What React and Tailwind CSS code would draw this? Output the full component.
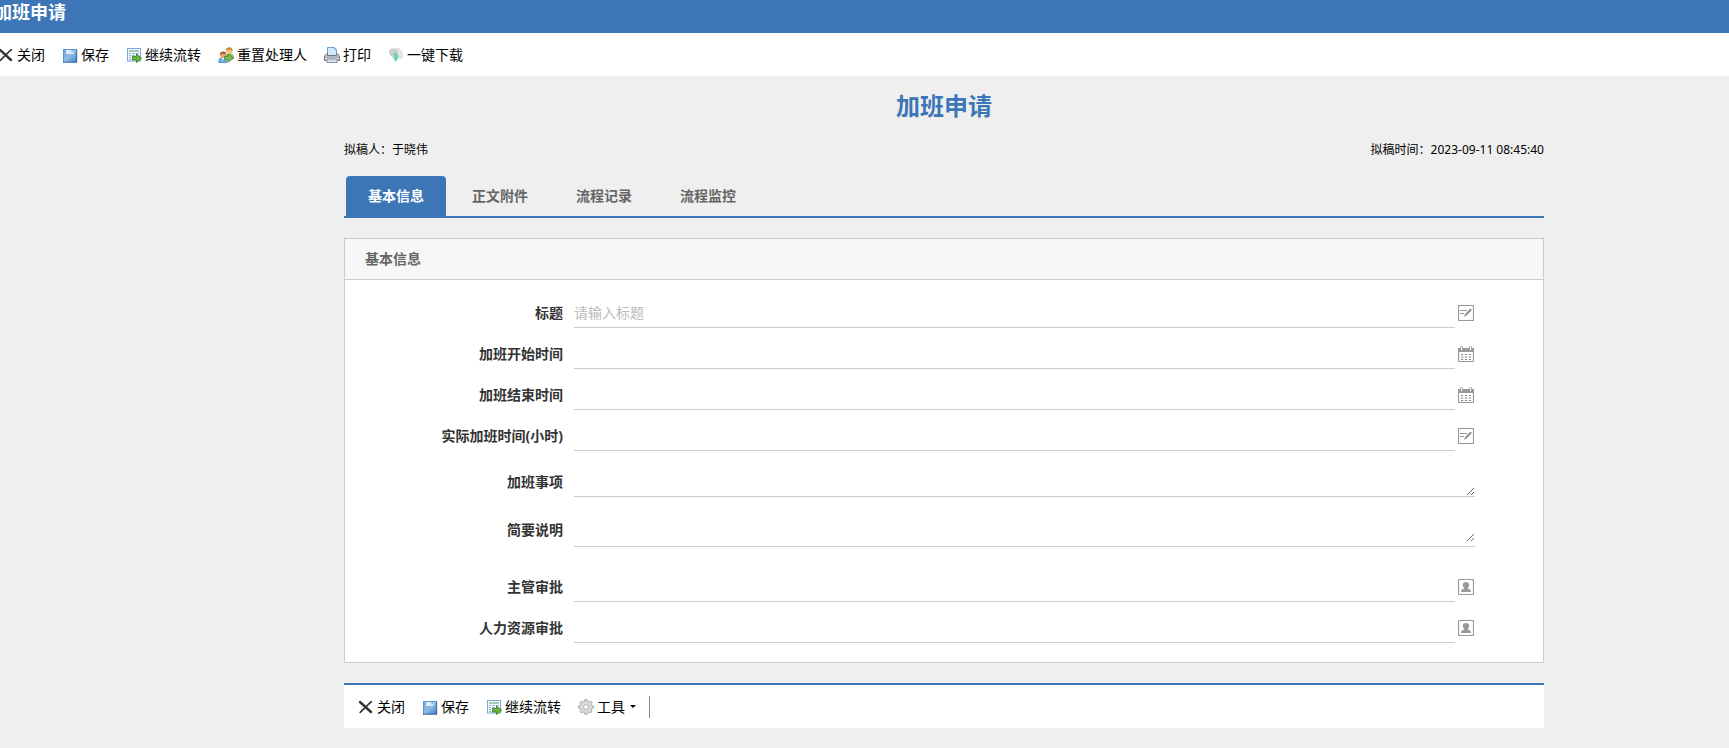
import React, { useState } from 'react'

function CloseIcon() {
  return (
    <svg className="h-4 w-4" viewBox="0 0 16 16" fill="none" stroke="#333" strokeLinecap="round">
      <path d="M2 3L13 13" strokeWidth="2.4" />
      <path d="M13.2 2.6L2.2 13.4" strokeWidth="1.6" />
    </svg>
  )
}

function SaveIcon() {
  return (
    <svg className="h-4 w-4" viewBox="0 0 16 16">
      <defs>
        <linearGradient id="disk" x1="0" y1="0" x2="1" y2="1">
          <stop offset="0" stopColor="#6ba5e0" />
          <stop offset="0.5" stopColor="#8dbbe8" />
          <stop offset="1" stopColor="#3f7dc0" />
        </linearGradient>
      </defs>
      <rect x="1" y="2" width="14" height="13.5" fill="url(#disk)" />
      <path d="M1.5 15.5V2.5H14.5" fill="none" stroke="#5b95d2" />
      <path d="M1 15.2H14.7V2.5" fill="none" stroke="#2f5580" strokeWidth="0.8" />
      <rect x="4" y="3" width="7.5" height="4" fill="#dceafa" />
      <rect x="9.5" y="3" width="1.2" height="2.4" fill="#6ba5e0" />
    </svg>
  )
}

function FlowIcon() {
  return (
    <svg className="h-4 w-4" viewBox="0 0 16 16">
      <rect x="1.5" y="1.5" width="13" height="12.5" fill="#f3f8fe" stroke="#7ba6d8" />
      <rect x="3" y="3" width="10" height="2" fill="#a5cbb4" />
      <path d="M3 6.5H5M6 6.5H9M10 6.5H13M3 8.5H5M6 8.5H9M3 10.5H5M3 12.5H5" stroke="#8eb3de" />
      <path d="M6.5 9.5H10.5V7L15.6 11.2L10.5 15.5V13H6.5Z" fill="#6cb33e" stroke="#3f7d27" strokeWidth="0.9" />
    </svg>
  )
}

function ResetIcon() {
  return (
    <svg className="h-4 w-4" viewBox="0 0 16 16">
      <path d="M7.5 9Q8 6.5 11 6.5Q15.7 6.5 15.7 11.5L10 13Z" fill="#8fbf52" stroke="#5f8d36" strokeWidth="0.5" />
      <circle cx="11.2" cy="4" r="3" fill="#f2c27d" />
      <path d="M7.8 4Q7.5 0.3 11.3 0.3Q15 0.5 14.5 4.4L13 2.8L9.5 2.8Z" fill="#d08a2a" />
      <path d="M0.8 15.5Q0.5 10.5 5 10.5Q9 10.5 9 15.5Z" fill="#74aee6" stroke="#3a75bb" strokeWidth="0.7" />
      <path d="M3.6 10.6L5 13.2L6.6 10.6Z" fill="#fff" />
      <circle cx="5" cy="8.2" r="2.8" fill="#eaa671" />
      <path d="M2 8.2Q1.5 4.7 5 4.6Q8.5 4.7 8 7.6L6.5 6.8L3.4 7Z" fill="#a4592c" />
      <path d="M6.5 9.5H10.2V7.2L15.4 11.2L10.2 15.2V12.8H6.5Z" fill="#7cb956" stroke="#4f8d37" strokeWidth="0.8" />
    </svg>
  )
}

function PrintIcon() {
  return (
    <svg className="h-4 w-4" viewBox="0 0 16 16">
      <path d="M3.5 9V0.5H10.5L12.5 2.5V9Z" fill="#d5e8fa" stroke="#6f9cc8" />
      <path d="M10.3 0.8V2.8H12.3" fill="#fff" stroke="#6f9cc8" strokeWidth="0.7" />
      <path d="M2.5 7H3.5V8.5H12.5V7H13.5Q15.5 8 15.5 10V13.5H0.5V10Q0.5 8 2.5 7Z" fill="#d3d5da" stroke="#6d7179" />
      <path d="M1.5 10H14.5" stroke="#9397a0" />
      <path d="M3 12H13V15.5H3Z" fill="#edf4fb" stroke="#7b8594" strokeWidth="0.9" />
      <path d="M4.5 13.7H11.5" stroke="#b7d0ea" />
    </svg>
  )
}

function DownloadIcon() {
  return (
    <svg className="h-4 w-4" viewBox="0 0 16 16">
      <path d="M5 1.8L10.5 0.8Q13 2 15 6.5L14.5 11.8L9 11Z" fill="#dedede" />
      <path d="M1 5Q1.4 2 5 1.6Q8.5 1.5 9.8 5L11.5 10.5L7 11.5Q1 9 1 5Z" fill="#c9cccb" />
      <path d="M10.5 1L15 6.5L11.5 10.5L9.8 5Z" fill="#e4e4e4" />
      <path d="M6.2 6.3L8.8 5.8L9.2 10.2H10.4L8 15L5.2 11H6.5Z" fill="#52dba5" />
    </svg>
  )
}

function GearIcon() {
  return (
    <svg className="h-4 w-4" viewBox="0 0 16 16">
      <path
        d="M6.7 0.7H9.3L9.7 2.6L11.1 3.2L12.7 2.1L14.2 3.7L13.1 5.2L13.6 6.6L15.4 6.9V9.1L13.6 9.5L13 10.9L14.1 12.5L12.5 14L10.9 13L9.6 13.5L9.2 15.3H6.9L6.5 13.5L5.1 13L3.5 14L2 12.4L3 10.9L2.5 9.5L0.6 9.1V6.9L2.5 6.5L3 5.2L2 3.6L3.5 2.1L5.1 3.1L6.4 2.6Z"
        fill="#dcdcdc"
        stroke="#a3a3a3"
        strokeWidth="0.9"
      />
      <circle cx="8" cy="8" r="2.4" fill="#fff" stroke="#a8a8a8" strokeWidth="0.9" />
    </svg>
  )
}

function EditIcon() {
  return (
    <svg className="h-4 w-4" viewBox="0 0 16 16" fill="none">
      <rect x="0.5" y="0.5" width="15" height="15" rx="0.5" stroke="#999" strokeWidth="1.2" />
      <path d="M2 5.5H9M2 8.5H6" stroke="#999" strokeWidth="1.2" />
      <path d="M13.2 4.3L7.6 10" stroke="#8c8c8c" strokeWidth="2" />
      <path d="M6 11.6L6.6 9.4L8.3 11Z" fill="#8c8c8c" />
    </svg>
  )
}

function CalendarIcon() {
  return (
    <svg className="h-4 w-4" viewBox="0 0 16 16" fill="none">
      <rect x="0.5" y="2.5" width="15" height="13" rx="0.5" stroke="#999" strokeWidth="1.2" />
      <rect x="0" y="2" width="16" height="4" fill="#999" />
      <rect x="2.5" y="0.5" width="2" height="4" rx="1" fill="#fff" stroke="#999" />
      <rect x="11.5" y="0.5" width="2" height="4" rx="1" fill="#fff" stroke="#999" />
      <path d="M3 8.5H13M3 11H13M3 13.5H13" stroke="#888" strokeDasharray="2 2" />
      <path d="M3 8.5H13M3 11H13M3 13.5H13" stroke="#999" opacity="0.25" />
    </svg>
  )
}

function UserIcon() {
  return (
    <svg className="h-4 w-4" viewBox="0 0 16 16" fill="none">
      <rect x="0.5" y="0.5" width="15" height="15" rx="1" stroke="#999" strokeWidth="1.2" />
      <path d="M8 3C10 3 11.2 4.2 11.2 5.9C11.2 7.3 10.5 8 9.8 8.6V9.4C11.5 9.8 13 10.7 13 13H3C3 10.7 4.5 9.8 6.2 9.4V8.6C5.5 8 4.8 7.3 4.8 5.9C4.8 4.2 6 3 8 3Z" fill="#999" />
    </svg>
  )
}

const topActions = [
  { label: '关闭', Icon: CloseIcon },
  { label: '保存', Icon: SaveIcon },
  { label: '继续流转', Icon: FlowIcon },
  { label: '重置处理人', Icon: ResetIcon },
  { label: '打印', Icon: PrintIcon },
  { label: '一键下载', Icon: DownloadIcon },
]

const bottomActions = [
  { label: '关闭', Icon: CloseIcon },
  { label: '保存', Icon: SaveIcon },
  { label: '继续流转', Icon: FlowIcon },
  { label: '工具', Icon: GearIcon, menu: true },
]

const tabs = ['基本信息', '正文附件', '流程记录', '流程监控']

function ActionButton({ label, Icon, menu }) {
  return (
    <button type="button" className="flex items-center gap-[3px] whitespace-nowrap text-sm text-black">
      <Icon />
      <span>{label}</span>
      {menu && <span className="ml-0.5 border-x-[3px] border-t-[3px] border-x-transparent border-t-black"></span>}
    </button>
  )
}

function Label({ id, children }) {
  return (
    <label htmlFor={id} className="w-[218px] shrink-0 text-right text-sm font-bold text-[#333]">
      {children}
    </label>
  )
}

// 单行字段：右侧带图标
function InputRow({ id, label, Icon, placeholder, className = 'mt-[11px]' }) {
  return (
    <div className={`flex items-center gap-[11px] ${className}`}>
      <Label id={id}>{label}</Label>
      <div className="flex min-w-0 flex-1 items-center">
        <input
          id={id}
          type="text"
          placeholder={placeholder}
          className="h-[30px] min-w-0 flex-1 border-b border-[#ccc] bg-white text-sm text-[#333] outline-none placeholder:text-[#bbb]"
        />
        <button type="button" aria-label={label} className="w-5 shrink-0 pl-[3px]">
          <Icon />
        </button>
      </div>
    </div>
  )
}

// 多行字段：可拖拽高度
function TextareaRow({ id, label, className }) {
  return (
    <div className="mt-4 flex items-center gap-[11px]">
      <Label id={id}>{label}</Label>
      <div className={`flex min-w-0 flex-1 border-b border-[#ccc] ${className}`}>
        <textarea id={id} className="h-[29px] w-full resize overflow-hidden bg-white text-sm text-[#333] outline-none" />
      </div>
    </div>
  )
}

export default function App() {
  const [active, setActive] = useState(0)

  return (
    <div className="min-h-screen overflow-hidden bg-[#efefef] pb-5 font-['Noto_Sans','Noto_Sans_CJK_SC',sans-serif] text-black">
      {/* 顶部标题栏 */}
      <header className="h-[33px] bg-[#3c76b7]">
        <h1 className="-ml-1.5 text-lg leading-6 font-bold text-white">加班申请</h1>
      </header>

      <div className="bg-white">
        <div className="-ml-0.5 flex h-[43px] items-center gap-[17px]">
          {topActions.map((a) => (
            <ActionButton key={a.label} {...a} />
          ))}
        </div>
      </div>

      <main className="pr-[185px] pl-[344px]">
        <h2 className="pt-3 text-center text-2xl leading-9 font-bold text-[#3c76b7]">加班申请</h2>

        <div className="mt-4 flex justify-between text-xs leading-5">
          <span>拟稿人：于晓伟</span>
          <span>拟稿时间：2023-09-11 08:45:40</span>
        </div>

        {/* 标签页 */}
        <nav className="mt-4 flex gap-1 border-b-2 border-[#3c76b7] pl-0.5">
          {tabs.map((t, i) => (
            <button
              key={t}
              type="button"
              onClick={() => setActive(i)}
              className={`h-10 rounded-t px-[22px] text-sm font-bold ${
                active === i ? 'bg-[#3c76b7] text-white' : 'text-[#666]'
              }`}
            >
              {t}
            </button>
          ))}
        </nav>

        <section className="mt-5 border border-[#ccc] bg-white">
          <h3 className="flex h-[41px] items-center border-b border-[#ccc] bg-[#f7f7f7] px-5 text-sm font-bold text-[#666]">
            基本信息
          </h3>
          <form className="pt-[7px] pr-[68px] pb-[19px]">
            <InputRow id="title" label="标题" placeholder="请输入标题" Icon={EditIcon} />
            <InputRow id="start" label="加班开始时间" Icon={CalendarIcon} />
            <InputRow id="end" label="加班结束时间" Icon={CalendarIcon} />
            <InputRow id="hours" label="实际加班时间(小时)" Icon={EditIcon} />
            <TextareaRow id="matter" label="加班事项" className="" />
            <TextareaRow id="remark" label="简要说明" className="pb-1" />
            <InputRow id="manager" label="主管审批" Icon={UserIcon} className="mt-[25px]" />
            <InputRow id="hr" label="人力资源审批" Icon={UserIcon} />
          </form>
        </section>

        {/* 底部操作栏 */}
        <div className="mt-5 flex h-[45px] items-center gap-[17px] border-t-2 border-[#3c76b7] bg-white pl-3.5">
          {bottomActions.map((a) => (
            <ActionButton key={a.label} {...a} />
          ))}
          <span className="-ml-1 h-[22px] w-px bg-[#888]"></span>
        </div>
      </main>
    </div>
  )
}
